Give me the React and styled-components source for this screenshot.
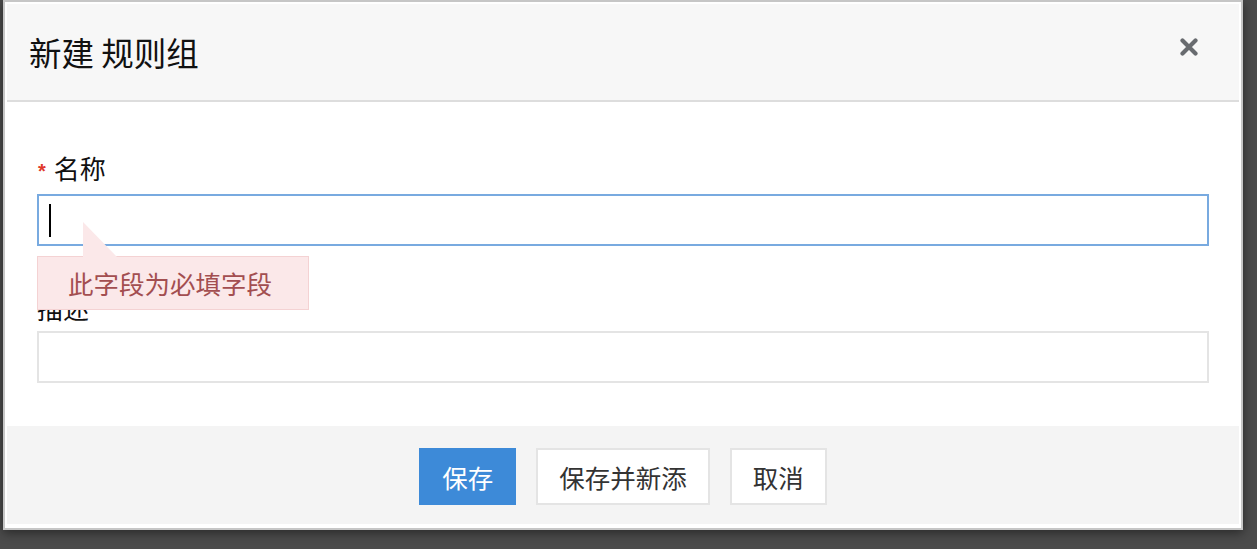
import React from "react";
import styled, { createGlobalStyle } from "styled-components";

const Global = createGlobalStyle`
  html, body { margin: 0; padding: 0; }
  body {
    background: #4b4b4b;
    font-family: "Noto Sans CJK SC", "Noto Sans", sans-serif;
    height: 549px;
    overflow: hidden;
  }
  * { box-sizing: border-box; }
`;

const Page = styled.div`
  padding-left: 3px;
  width: 1257px;
  height: 549px;
`;

const Modal = styled.div`
  width: 1240px;
  height: 530px;
  background: #fff;
  border: 2px solid #c6c6c6;
  padding: 2px;
  display: flex;
  flex-direction: column;
  box-shadow: 0 3px 10px rgba(0, 0, 0, 0.45);
`;

const Header = styled.div`
  height: 98px;
  flex: none;
  background: #f7f7f7;
  border-bottom: 2px solid #dddddd;
  display: flex;
  align-items: center;
  justify-content: space-between;
  padding: 0 41px 0 22px;
`;

const Title = styled.h4`
  margin: 0;
  font-size: 32.5px;
  font-weight: 400;
  color: #111;
  line-height: 1;
`;

const CloseButton = styled.button`
  border: 0;
  background: transparent;
  padding: 0;
  width: 18px;
  height: 18px;
  display: flex;
  margin-top: -10px;
  cursor: pointer;
`;

const Body = styled.div`
  flex: 1;
  padding: 45px 30px 0;
  display: flex;
  flex-direction: column;
  gap: 44px;
`;

const Group = styled.div`
  position: relative;
  display: flex;
  flex-direction: column;
`;

const Label = styled.label`
  font-size: 26px;
  line-height: 36px;
  color: #111;
  margin-bottom: 5px;
  display: flex;
  align-items: center;
`;

const Required = styled.span`
  color: #e0392b;
  font-size: 20px;
  margin: 6px 8px 0 1px;
  font-family: "Liberation Sans", sans-serif;
  font-weight: 700;
`;

const Field = styled.div`
  height: 52px;
  flex: none;
  border: 2px solid ${(p) => (p.$focused ? "#78aae0" : "#e4e4e4")};
  background: #fff;
  display: flex;
  align-items: center;
  padding-left: 10px;
`;

const Caret = styled.span`
  display: block;
  width: 2px;
  height: 33px;
  background: #000;
`;

const Tip = styled.div`
  position: absolute;
  z-index: 2;
  left: 0;
  top: calc(100% + 10px);
  width: 272px;
  height: 54px;
  background: #fbe8e9;
  border: 1px solid #f4d2d3;
  color: #a34e50;
  font-size: 25.5px;
  line-height: 52px;
  padding-left: 30px;
  &::before {
    content: "";
    position: absolute;
    left: 45px;
    top: -35px;
    width: 0;
    height: 0;
    border-bottom: 35px solid #fbe8e9;
    border-right: 34px solid transparent;
  }
`;

const Footer = styled.div`
  height: 98px;
  flex: none;
  background: #f4f4f4;
  display: flex;
  align-items: center;
  justify-content: center;
  gap: 20px;
  padding-top: 3px;
  margin-bottom: 2px;
`;

const Button = styled.button`
  height: 57px;
  padding: 0 ${(p) => (p.$primary ? 23 : 21)}px;
  font-family: "Noto Sans CJK SC", sans-serif;
  font-size: 25.5px;
  border: ${(p) => (p.$primary ? "0" : "2px solid #e4e4e4")};
  background: ${(p) => (p.$primary ? "#3d8ad8" : "#fff")};
  color: ${(p) => (p.$primary ? "#fff" : "#333")};
  cursor: pointer;
`;

export default function App() {
  return (
    <Page>
      <Global />
      <Modal>
        <Header>
          <Title>新建 规则组</Title>
          <CloseButton aria-label="关闭">
            <svg width="18" height="18" viewBox="0 0 18 18">
              <path d="M2.5 2.5 L15.5 15.5 M15.5 2.5 L2.5 15.5" stroke="#686b6f" strokeWidth="4.2" strokeLinecap="round" />
            </svg>
          </CloseButton>
        </Header>
        <Body>
          <Group>
            <Label>
              <Required>*</Required>名称
            </Label>
            <Field $focused>
              <Caret />
            </Field>
            <Tip>此字段为必填字段</Tip>
          </Group>
          <Group>
            <Label>描述</Label>
            <Field />
          </Group>
        </Body>
        <Footer>
          <Button $primary>保存</Button>
          <Button>保存并新添</Button>
          <Button>取消</Button>
        </Footer>
      </Modal>
    </Page>
  );
}
